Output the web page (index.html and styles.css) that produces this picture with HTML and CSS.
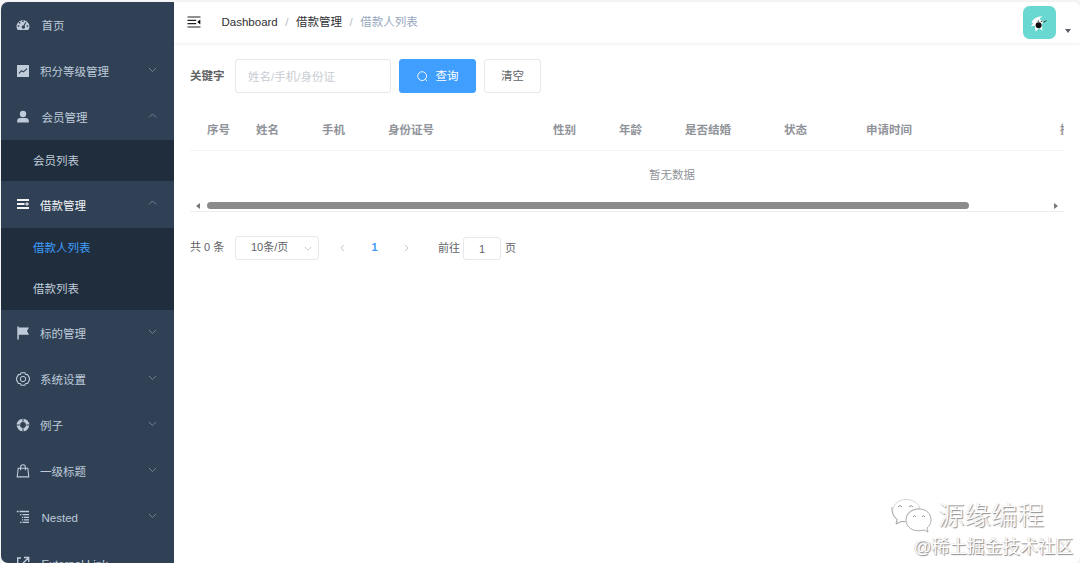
FILE: index.html
```html
<!DOCTYPE html>
<html lang="zh-CN">
<head>
<meta charset="utf-8">
<title>借款人列表</title>
<link rel="stylesheet" href="styles.css">
</head>
<body>
<div class="app">
  <nav class="sidebar">
    <div class="item wide"><svg class="icon" viewBox="0 0 14 14"><path fill="currentColor" fill-rule="evenodd" d="M1.7 12A6.3 6.3 0 1 1 12.3 12ZM6.2 2.6h1.5v1.5H6.2ZM3 4h1.4v1.4H3ZM1.8 7.3h1.5v1.4H1.8ZM10.7 7.3h1.5v1.4h-1.5ZM9.3 4.1 7.5 7.4a1.6 1.6 0 1 0 1 .5l1.7-3.3Z"/></svg><span>首页</span></div>
    <div class="item"><svg class="icon" viewBox="0 0 14 14"><rect x="1" y="1" width="12" height="12" rx=".6" fill="currentColor"/><path d="m3 9.3 2.5-2.6 2 1.2L11 4.6" fill="none" stroke="#304156" stroke-width="1.1"/></svg><span>积分等级管理</span><svg class="arrow" viewBox="0 0 10 6"><path d="m1 1 4 4 4-4"/></svg></div>
    <div class="item wide"><svg class="icon" viewBox="0 0 14 14"><circle cx="7" cy="4" r="3.2" fill="currentColor"/><path fill="currentColor" d="M1.200 12.500v-1.400Q1.200 8 4.500 8h5q3.300 0 3.300 3.100v1.400Z"/></svg><span>会员管理</span><svg class="arrow" viewBox="0 0 10 6"><path d="m1 5 4-4 4 4"/></svg></div>
    <div class="sub"><span>会员列表</span></div>
    <div class="item open"><svg class="icon" viewBox="0 0 14 14"><path d="M1 3h12M1 7h7.5M1 11h12" fill="none" stroke="currentColor" stroke-width="1.8"/><path d="M9 7h4M11 5.2v3.6" stroke="currentColor" stroke-width="1.1"/></svg><span>借款管理</span><svg class="arrow" viewBox="0 0 10 6"><path d="m1 5 4-4 4 4"/></svg></div>
    <div class="sub current"><span>借款人列表</span></div>
    <div class="sub"><span>借款列表</span></div>
    <div class="item"><svg class="icon" viewBox="0 0 14 14"><path fill="currentColor" d="M1.300.6h1.500v1h10.200l-2 3.400 2 3.700H2.800v4.800H1.300Z"/></svg><span>标的管理</span><svg class="arrow" viewBox="0 0 10 6"><path d="m1 1 4 4 4-4"/></svg></div>
    <div class="item"><svg class="icon" viewBox="0 0 14 14"><g fill="none" stroke="currentColor"><path stroke-width="1.100" d="M5.200.8h3.600l.9 1.700 1.900.1L13.400 6v2l-1.800 3.400-1.900.1-.9 1.700H5.200l-.9-1.700-1.900-.1L.6 8V6l1.800-3.400 1.900-.1Z"/><circle cx="7" cy="7" r="2.700"/></g></svg><span>系统设置</span><svg class="arrow" viewBox="0 0 10 6"><path d="m1 1 4 4 4-4"/></svg></div>
    <div class="item"><svg class="icon" viewBox="0 0 14 14"><circle cx="7" cy="7" r="4.600" fill="none" stroke="currentColor" stroke-width="3.400"/><path d="M7 .5v3.200M7 10.300v3.200M.5 7h3.200M10.300 7h3.200" stroke="#304156" stroke-width="1.100"/></svg><span>例子</span><svg class="arrow" viewBox="0 0 10 6"><path d="m1 1 4 4 4-4"/></svg></div>
    <div class="item"><svg class="icon" viewBox="0 0 14 14"><path fill="none" stroke="currentColor" stroke-width="1.1" d="M2.200 4.300h9.600l1 8.600H1.200ZM4.600 6.300V3.500a2.400 2.800 0 0 1 4.800 0v2.800"/></svg><span>一级标题</span><svg class="arrow" viewBox="0 0 10 6"><path d="m1 1 4 4 4-4"/></svg></div>
    <div class="item wide"><svg class="icon" viewBox="0 0 14 14"><path d="M.8 1.500h1.800M3.500 1.500H13M4 4.600h1.500M6.500 4.600H13M6 7.300h1.200M8 7.300h5M6 9.800h1.200M8 9.800h5M4 12.300h1.500M6.500 12.300H13" stroke="currentColor" stroke-width="1.300"/></svg><span>Nested</span><svg class="arrow" viewBox="0 0 10 6"><path d="m1 1 4 4 4-4"/></svg></div>
    <div class="item wide"><svg class="icon" viewBox="0 0 14 14"><path fill="none" stroke="currentColor" stroke-width="1.4" d="M5 2H1.700v10.300h10.600V8M8 1.500h4.700V6M12.500 1.700 6 8.200"/></svg><span>External Link</span></div>
  </nav>
  <main class="main">
    <header class="navbar">
      <svg class="fold" viewBox="0 0 14 12"><path d="M.5 1h13M.5 4.300h8.700M.5 7.700h8.700M.5 11h13" stroke="#222" stroke-width="1.200"/><path d="M13.300 3.600v4.800L10.400 6Z"/></svg>
      <div class="crumbs"><span>Dashboard</span><i>/</i><span>借款管理</span><i>/</i><span class="last">借款人列表</span></div>
      <div class="user">
        <svg class="avatar" viewBox="0 0 33 33"><rect width="33" height="33" rx="6.500" fill="#68d8d0"/><path fill="#fff" d="M8.500 17c1.200-4 5-6.600 11-6.800-2 1.200-2.800 2.300-2.800 3.400l3.800 1.700-1.500 3 .4 6.400-3-2.500-3.800 3.200-.8-5.600-4 .5 2.500-3.200Z"/><circle cx="15.600" cy="19.300" r="3" fill="#111"/><path d="m14.700 15.400 1.200-.7m2 1 1.500-.8m1 1.500 3-1.800" stroke="#344" stroke-width="1.100"/></svg>
        <span class="caret"></span>
      </div>
    </header>
    <section class="content">
      <form class="filter">
        <label>关键字</label>
        <input class="keyword" placeholder="姓名/手机/身份证">
        <button type="button" class="btn primary"><svg viewBox="0 0 12 12"><circle cx="5.600" cy="5.600" r="4.800"/><path d="m9 9 2 2"/></svg>查询</button>
        <button type="button" class="btn">清空</button>
      </form>
      <div class="table">
        <div class="thead">
          <span class="c-index">序号</span><span class="c-small">姓名</span><span class="c-small">手机</span><span class="c-id">身份证号</span><span class="c-small">性别</span><span class="c-small">年龄</span><span class="c-mid">是否结婚</span><span class="c-state">状态</span><span class="c-time">申请时间</span><span class="c-small">操作</span>
        </div>
        <div class="empty">暂无数据</div>
        <div class="scroll"><span class="left"></span><span class="thumb"></span><span class="right"></span></div>
      </div>
      <div class="pager">
        <span class="total">共 0 条</span>
        <span class="size">10条/页<svg viewBox="0 0 10 6"><path d="m1 1 4 4 4-4"/></svg></span>
        <svg class="step" viewBox="0 0 6 10"><path d="M5 1 1 5l4 4"/></svg>
        <b>1</b>
        <svg class="step" viewBox="0 0 6 10"><path d="m1 1 4 4-4 4"/></svg>
        <span class="goto">前往</span><span class="page">1</span><span class="unit">页</span>
      </div>
    </section>
  </main>
  <div class="mark">
    <div class="mark-top">
      <svg viewBox="0 0 44 36"><g fill="#fff" stroke="#999" stroke-width=".8"><path stroke="#ccc" d="M5 20C-1 12 5 2 15 1.500c8-.3 14 4 15 9.500C20 10 14 17 17 24l-6-.5-4.500 2.500 1-4.500Z"/><path fill="none" d="M2 9q-1 7 5 12.500l-1 4.500 5-2.500h4"/><path d="M29 11c8 0 12 5 12 11 0 4-2 6-4 8l1 4-4-2c-11 3-18-3-18-10 0-6 6-11 13-11Z"/><path fill="none" d="M8 9q2-3 4 0M19 9q2-3 4 0M23 19q1.500-3 3 0M32 19q1.500-3 3 0" stroke="#777"/></g></svg>
      <span>源缘编程</span>
    </div>
    <div class="mark-bottom">@稀土掘金技术社区</div>
  </div>
</div>
</body>
</html>
```
FILE: styles.css
```css
* { box-sizing: border-box; }
body {
  margin: 0;
  background: #f5f5f6;
  font: 11.5px/1.2 "Liberation Sans", "Noto Sans CJK SC", sans-serif;
  color: #606266;
}
svg { display: block; flex: none; }
.app { position: relative; display: flex; height: 563px; padding: 2px 0 0 1px; overflow: hidden; }

.sidebar {
  width: 173px;
  flex: none;
  overflow: hidden;
  background: #304156;
  border-radius: 7px 0 0 7px;
  color: #bfcbd9;
}
.item { display: flex; align-items: center; height: 46.1px; padding: 0 17px 0 15px; }
.item .icon { width: 14px; height: 14px; margin-right: 10px; }
.item.wide .icon { margin-right: 11.5px; }
.item.open { color: #f4f4f5; }
.item > span { padding-top: 4px; white-space: nowrap; }
.sub > span { padding-top: 2px; white-space: nowrap; }
.arrow { width: 9px; height: 5.4px; margin: 0 0 3px auto; fill: none; stroke: #8491a1; stroke-width: .9; }
.sub { display: flex; align-items: center; height: 41.15px; padding-left: 32px; background: #1f2d3d; }
.sub.current { color: #409eff; }

.main { flex: 1; min-width: 0; background: #fff; border-radius: 0 7px 7px 0; }
.navbar {
  display: flex;
  align-items: center;
  height: 41px;
  padding: 0 9px 0 13px;
  box-shadow: 0 1px 3px rgba(0, 21, 41, .08);
}
.fold { width: 14px; height: 12px; margin-top: -1px; }
.crumbs { display: flex; align-items: center; margin-left: 20.5px; color: #303133; }
.crumbs i { margin: 0 7.5px; color: #b5bac4; font-style: normal; }
.crumbs .last { color: #97a8be; }
.user { display: flex; align-items: center; margin-left: auto; }
.avatar { width: 33px; height: 33px; }
.caret { margin: 17px 0 0 9px; border: 3px solid transparent; border-top: 4px solid #5a5e66; border-bottom: 0; }

.content { padding: 16px 16px 0; }
.filter { display: flex; align-items: center; height: 34px; }
.filter label { width: 45px; padding-top: 2px; font-weight: 700; color: #606266; }
.keyword {
  width: 156px;
  height: 34px;
  padding: 1px 12px 0;
  border: 1px solid #e6e8ee;
  border-radius: 3px;
  font: inherit;
  background: #fff;
}
.keyword::placeholder { color: #c8ccd3; }
.btn {
  display: flex;
  align-items: center;
  justify-content: center;
  width: 57px;
  height: 34px;
  margin-left: 8px;
  padding: 2px 0 0;
  border: 1px solid #e6e8ee;
  border-radius: 3px;
  background: #fff;
  color: #606266;
  font: inherit;
}
.btn.primary { width: 77px; border-color: #409eff; background: #409eff; color: #fff; }
.btn svg { width: 11px; height: 11px; margin: -1px 8px 0 0; fill: none; stroke: #fff; stroke-width: 1; }

.table { width: 874px; margin-top: 18px; overflow: hidden; border-bottom: 1px solid #ebedf2; }
.thead { display: flex; align-items: center; height: 40px; padding-top: 1px; border-bottom: 1px solid #f3f4f7; font-weight: 700; color: #909399; white-space: nowrap; }
.thead span { flex: none; }
.c-index { width: 66px; padding-left: 17px; }
.c-small { width: 66px; }
.c-id { width: 165px; }
.c-mid { width: 99px; }
.c-state { width: 82px; }
.c-time { width: 194px; }
.empty { height: 48px; padding-left: 90px; line-height: 48px; text-align: center; color: #909399; }
.scroll { display: flex; align-items: center; height: 12px; padding: 1px 6px 0; }
.thumb { width: 762px; height: 7px; margin-left: 7px; border-radius: 4px; background: #8b8b8b; }
.left, .right { border: 3px solid transparent; }
.left { border-left: 0; border-right: 4px solid #777; }
.right { margin-left: auto; border-right: 0; border-left: 4px solid #777; }

.pager { display: flex; align-items: center; height: 24px; margin-top: 24px; font-size: 11px; }
.pager > span { flex: none; white-space: nowrap; }
.total { width: 45px; }
.size { display: flex; align-items: center; width: 84px; height: 24px; padding: 0 6px 0 15px; border: 1px solid #e6e8ee; border-radius: 3px; }
.size svg { width: 8px; height: 5px; margin-left: auto; fill: none; stroke: #c0c4cc; }
.step { width: 5px; height: 8px; margin: 0 21px; fill: none; stroke: #b4b8c0; }
.pager b { width: 17px; text-align: center; color: #409eff; }
.goto { margin-left: 8px; padding-top: 2px; }
.unit { padding-top: 2px; }
.page { width: 38px; height: 23px; margin: 0 4px 0 3px; border: 1px solid #e6e8ee; border-radius: 3px; text-align: center; line-height: 22px; }

.mark { position: absolute; right: 7px; bottom: 3px; color: #fff; text-align: right; }
.mark-top { display: flex; align-items: center; justify-content: flex-end; height: 36px; padding-right: 29px; }
.mark-top svg { width: 44px; height: 36px; }
.mark-top span { margin-left: 4px; font-size: 26.5px; font-weight: 300; line-height: 32px; text-shadow: 1px 1px 1px #888, -.5px -.5px 0 #e2e2e2; }
.mark-bottom { font-size: 17.7px; line-height: 26px; text-shadow: 1px 1px 1px #888, -.5px -.5px 0 #ccc; }
```
